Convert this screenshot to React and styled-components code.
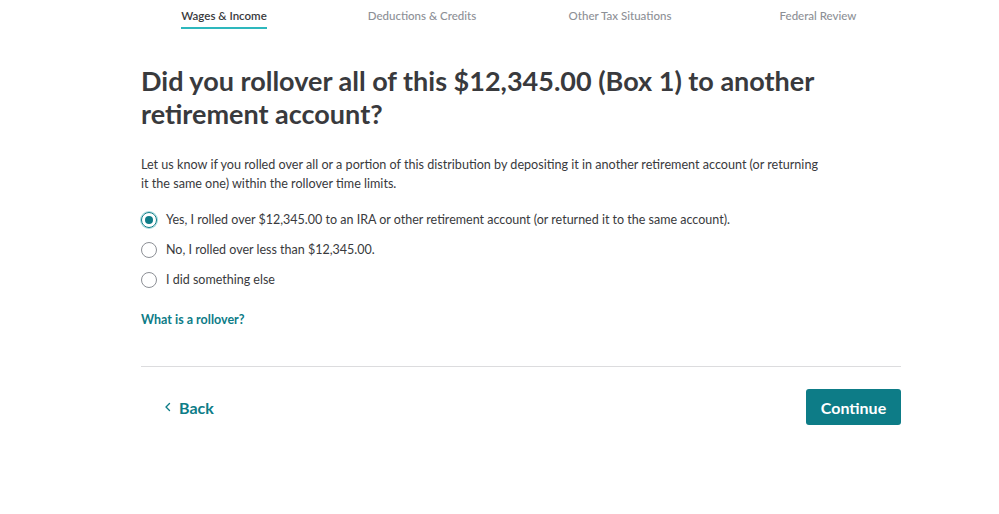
import React, { useState } from 'react';
import styled, { createGlobalStyle } from 'styled-components';

const GlobalStyle = createGlobalStyle`
  html, body {
    margin: 0;
    padding: 0;
    background: #fff;
  }
  body {
    font-family: Lato, "Noto Sans", "Liberation Sans", sans-serif;
    color: #393a3d;
  }
`;

const steps = [
  { label: 'Wages & Income', active: true },
  { label: 'Deductions & Credits' },
  { label: 'Other Tax Situations' },
  { label: 'Federal Review' },
];

const options = [
  'Yes, I rolled over $12,345.00 to an IRA or other retirement account (or returned it to the same account).',
  'No, I rolled over less than $12,345.00.',
  'I did something else',
];

export default function App() {
  const [selected, setSelected] = useState(0);

  return (
    <Page>
      <GlobalStyle />
      <StepNav>
        {steps.map(step => (
          <Step key={step.label}>
            <StepLabel active={step.active}>{step.label}</StepLabel>
          </Step>
        ))}
      </StepNav>
      <Main>
        <Title>
          Did you rollover all of this $12,345.00 (Box 1) to another
          retirement account?
        </Title>
        <Intro>
          Let us know if you rolled over all or a portion of this distribution
          by depositing it in another retirement account (or returning it the
          same one) within the rollover time limits.
        </Intro>
        <Options>
          {options.map((text, i) => (
            <Option key={text} onClick={() => setSelected(i)}>
              <Radio checked={selected === i} />
              <span>{text}</span>
            </Option>
          ))}
        </Options>
        <HelpLink href="#">What is a rollover?</HelpLink>
        <Divider />
        <Footer>
          <BackButton>
            <svg width="10" height="10" viewBox="0 0 10 10">
              <path
                d="M6.5 1.5 L3 5 L6.5 8.5"
                fill="none"
                stroke="currentColor"
                strokeWidth="1.4"
                strokeLinecap="round"
                strokeLinejoin="round"
              />
            </svg>
            Back
          </BackButton>
          <ContinueButton>Continue</ContinueButton>
        </Footer>
      </Main>
    </Page>
  );
}

const Page = styled.div`
  width: 999px;
  height: 514px;
  overflow: hidden;
`;

const StepNav = styled.nav`
  display: grid;
  grid-template-columns: repeat(4, 198px);
  padding-left: 125px;
  height: 30px;
`;

const Step = styled.div`
  display: flex;
  justify-content: center;
`;

const StepLabel = styled.div`
  font-size: 11.5px;
  font-weight: ${p => (p.active ? 600 : 500)};
  color: ${p => (p.active ? '#393a3d' : '#8d9096')};
  padding-top: 9px;
  height: 18px;
  border-bottom: 2px solid ${p => (p.active ? '#2eb8bd' : 'transparent')};
`;

const Main = styled.main`
  width: 760px;
  margin-left: 141px;
`;

const Title = styled.h1`
  margin: 34px 0 0;
  font-size: 27px;
  line-height: 33px;
  font-weight: 700;
  color: #393a3d;
`;

const Intro = styled.p`
  margin: 25px 0 0;
  width: 685px;
  font-size: 12.6px;
  line-height: 19px;
  color: #393a3d;
`;

const Options = styled.div`
  display: flex;
  flex-direction: column;
  gap: 12px;
  margin-top: 18px;
`;

const Option = styled.label`
  display: flex;
  align-items: center;
  gap: 9px;
  font-size: 12.5px;
  line-height: 18px;
  cursor: pointer;
`;

const Radio = styled.span`
  box-sizing: border-box;
  width: 16px;
  height: 16px;
  border-radius: 50%;
  border: 1px solid ${p => (p.checked ? '#0d7c87' : '#8d9096')};
  display: flex;
  align-items: center;
  justify-content: center;
  flex-shrink: 0;
  box-shadow: ${p => (p.checked ? '0 0 0 1px #a6dde0' : 'none')};
  &::after {
    content: '';
    width: 8px;
    height: 8px;
    border-radius: 50%;
    background: ${p => (p.checked ? '#0d7c87' : 'transparent')};
  }
`;

const HelpLink = styled.a`
  display: inline-block;
  margin-top: 23px;
  font-size: 12.5px;
  font-weight: 700;
  color: #0d7c87;
  text-decoration: none;
`;

const Divider = styled.hr`
  margin: 39px 0 0;
  border: 0;
  border-top: 1px solid #dcdcde;
`;

const Footer = styled.div`
  display: flex;
  justify-content: space-between;
  align-items: center;
  margin-top: 22px;
`;

const BackButton = styled.button`
  display: flex;
  align-items: center;
  gap: 6px;
  margin-left: 22px;
  padding: 0;
  border: 0;
  background: none;
  font-family: inherit;
  font-size: 16px;
  font-weight: 700;
  color: #0d7c87;
  cursor: pointer;
`;

const ContinueButton = styled.button`
  width: 95px;
  height: 36px;
  border: 0;
  border-radius: 3px;
  background: #0d7c87;
  color: #fff;
  font-family: inherit;
  font-size: 16px;
  font-weight: 700;
  cursor: pointer;
`;
